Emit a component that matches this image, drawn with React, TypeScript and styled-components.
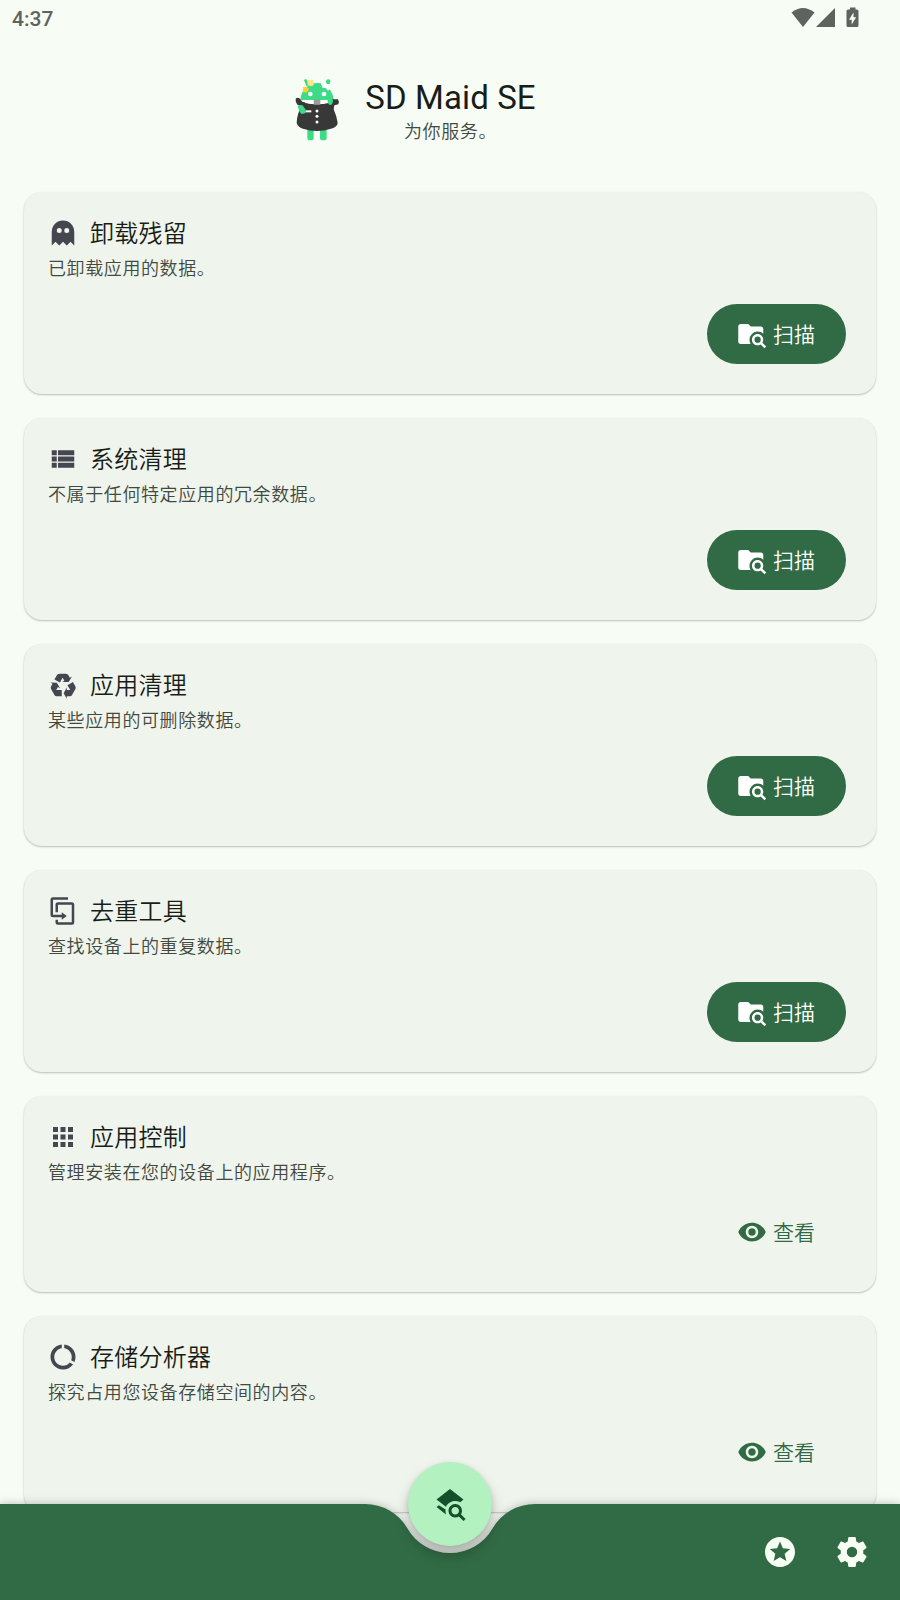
import React from "react";
import styled, { createGlobalStyle } from "styled-components";

const GlobalStyle = createGlobalStyle`
  * { box-sizing: border-box; }
  html, body { margin: 0; padding: 0; background: #f7fcf5; }
  body { font-family: Roboto, "Noto Sans CJK SC", sans-serif; color: #181d18; }
`;

const Screen = styled.div`
  position: relative;
  width: 900px;
  height: 1600px;
  overflow: hidden;
  display: flex;
  flex-direction: column;
  background: #f7fcf5;
`;

const StatusBar = styled.div`
  height: 36px;
  flex: none;
  display: flex;
  align-items: center;
  justify-content: space-between;
  padding: 0 39px 0 12px;
  color: #5f635f;
`;

const Clock = styled.span`
  font-size: 21px;
  font-weight: 500;
  line-height: 36px;
  padding-top: 2px;
`;

const StatusIcons = styled.svg`
  width: 70px;
  height: 24px;
  fill: currentColor;
`;

const Header = styled.header`
  height: 156px;
  flex: none;
  display: flex;
  justify-content: center;
  padding-top: 41px;
`;

const Mascot = styled.svg`
  width: 50px;
  height: 67px;
  margin: 1px 22px 0 -71px;
  flex: none;
`;

const Titles = styled.div`
  display: flex;
  flex-direction: column;
  align-items: center;
`;

const AppTitle = styled.h1`
  margin: 0;
  font-size: 33px;
  font-weight: 400;
  line-height: 42px;
  letter-spacing: 0.1px;
`;

const Slogan = styled.p`
  margin: 0;
  font-size: 18px;
  font-weight: 350;
  line-height: 26px;
  letter-spacing: 0.6px;
  color: #414941;
`;

const CardList = styled.main`
  display: flex;
  flex-direction: column;
  gap: 24px;
  padding: 0 24px;
`;

const Card = styled.section<{ $compact: boolean }>`
  height: ${(p) => (p.$compact ? 196 : 202)}px;
  flex: none;
  display: flex;
  flex-direction: column;
  padding: 24px 30px 30px 24px;
  border-radius: 18px;
  background: #eff4ec;
  box-shadow: 0 1px 2px rgba(0, 0, 0, 0.24), 0 0 1px rgba(0, 0, 0, 0.06);
`;

const CardHeading = styled.div`
  display: flex;
  align-items: center;
  gap: 12px;
  height: 34px;
`;

const CardTitle = styled.h2`
  margin: 0;
  padding-top: 2px;
  font-size: 24px;
  font-weight: 350;
  line-height: 34px;
  letter-spacing: 0.22px;
`;

const CardText = styled.p`
  margin: 6px 0 0;
  font-size: 18px;
  font-weight: 350;
  line-height: 26px;
  letter-spacing: 0.6px;
  color: #414941;
`;

const Action = styled.button<{ $filled: boolean }>`
  margin: auto 0 0 auto;
  flex: none;
  width: 139px;
  height: 60px;
  display: flex;
  align-items: center;
  gap: 6px;
  padding: 0 0 0 30px;
  border: 0;
  border-radius: 30px;
  font-family: inherit;
  font-size: 21px;
  font-weight: 350;
  line-height: 30px;
  white-space: nowrap;
  background: ${(p) => (p.$filled ? "#316b45" : "transparent")};
  color: ${(p) => (p.$filled ? "#ffffff" : "#316b45")};
`;

const ActionLabel = styled.span`
  padding-top: 2px;
`;

const Glyph = styled.svg<{ $size: number; $color?: string }>`
  width: ${(p) => p.$size}px;
  height: ${(p) => p.$size}px;
  fill: ${(p) => p.$color || "currentColor"};
  flex: none;
  display: block;
`;

const BottomBar = styled.nav`
  position: absolute;
  left: 0;
  bottom: 0;
  width: 900px;
  height: 96px;
  display: flex;
  align-items: center;
  justify-content: flex-end;
  gap: 36px;
  padding: 0 30px;
  color: #f7fff5;
`;

const BarShape = styled.svg`
  position: absolute;
  left: 0;
  top: 0;
  width: 900px;
  height: 96px;
  overflow: visible;
  fill: #316b45;
  filter: drop-shadow(0 0 4px rgba(0, 0, 0, 0.25));
`;

const BarButton = styled.button`
  position: relative;
  padding: 0;
  border: 0;
  background: none;
  color: inherit;
`;

const Fab = styled.button`
  position: absolute;
  left: 408px;
  bottom: 54px;
  width: 84px;
  height: 84px;
  display: flex;
  align-items: center;
  justify-content: center;
  padding: 0;
  border: 0;
  border-radius: 50%;
  background: #b3f1c1;
  color: #125129;
  box-shadow: 0 9px 14px rgba(0, 0, 0, 0.26), 0 1px 4px rgba(0, 0, 0, 0.1);
`;

const icons = {
  ghost:
    "M12,2A9,9 0 0,0 3,11V22L6,19L9,22L12,19L15,22L18,19L21,22V11A9,9 0 0,0 12,2M9,8A2,2 0 0,1 11,10A2,2 0 0,1 9,12A2,2 0 0,1 7,10A2,2 0 0,1 9,8M15,8A2,2 0 0,1 17,10A2,2 0 0,1 15,12A2,2 0 0,1 13,10A2,2 0 0,1 15,8Z",
  list: "M3 14h4v-4H3v4zm0 5h4v-4H3v4zM3 9h4V5H3v4zm5 5h13v-4H8v4zm0 5h13v-4H8v4zM8 5v4h13V5H8z",
  recycle:
    "M21.82,15.42L19.32,19.75C18.83,20.61 17.92,21.06 17,21H15V23L12.5,18.5L15,14V16H17.82L15.6,12.15L19.93,9.65L21.73,12.77C22.25,13.54 22.32,14.57 21.82,15.42M9.21,3.06H14.21C15.19,3.06 16.04,3.63 16.45,4.45L17.45,6.19L19.18,5.19L16.54,9.6L11.39,9.69L13.12,8.69L11.71,6.24L9.5,10.09L5.16,7.59L6.96,4.47C7.37,3.64 8.22,3.06 9.21,3.06M5.05,19.76L2.55,15.43C2.06,14.58 2.13,13.56 2.64,12.79L3.64,11.06L1.91,10.06L7.05,10.14L9.7,14.56L7.97,13.56L6.56,16H11V21H7.4C6.47,21.07 5.55,20.61 5.05,19.76Z",
  duplicate:
    "M11,17H4A2,2 0 0,1 2,15V3A2,2 0 0,1 4,1H16V3H4V15H11V13L15,16L11,19V17M19,21V7H8V13H6V7A2,2 0 0,1 8,5H19A2,2 0 0,1 21,7V21A2,2 0 0,1 19,23H8A2,2 0 0,1 6,21V19H8V21H19Z",
  apps: "M4 8h4V4H4v4zm6 12h4v-4h-4v4zm-6 0h4v-4H4v4zm0-6h4v-4H4v4zm6 0h4v-4h-4v4zm6-10v4h4V4h-4zm-6 4h4V4h-4v4zm6 6h4v-4h-4v4zm0 6h4v-4h-4v4z",
  usage:
    "M13 2.05v3.03c3.39.49 6 3.39 6 6.92 0 .9-.18 1.75-.48 2.54l2.6 1.53c.56-1.24.88-2.62.88-4.07 0-5.18-3.95-9.45-9-9.95zM12 19c-3.87 0-7-3.13-7-7 0-3.53 2.61-6.43 6-6.92V2.05c-5.06.5-9 4.76-9 9.95 0 5.52 4.47 10 9.99 10 3.31 0 6.24-1.61 8.06-4.09l-2.6-1.53C16.17 17.98 14.21 19 12 19z",
  folderSearch:
    "M16.5,12C19,12 21,14 21,16.5C21,17.38 20.75,18.21 20.31,18.9L23.39,22L22,23.39L18.88,20.32C18.19,20.75 17.37,21 16.5,21C14,21 12,19 12,16.5C12,14 14,12 16.5,12M16.5,14A2.5,2.5 0 0,0 14,16.5A2.5,2.5 0 0,0 16.5,19A2.5,2.5 0 0,0 19,16.5A2.5,2.5 0 0,0 16.5,14M9,4L11,6H19A2,2 0 0,1 21,8V11.81C19.83,10.69 18.25,10 16.5,10A6.5,6.5 0 0,0 10,16.5C10,17.79 10.37,19 11,20H3C1.89,20 1,19.1 1,18V6C1,4.89 1.89,4 3,4H9Z",
  eye: "M12 4.5C7 4.5 2.73 7.61 1 12c1.73 4.39 6 7.5 11 7.5s9.27-3.11 11-7.5c-1.73-4.39-6-7.5-11-7.5zM12 17c-2.76 0-5-2.24-5-5s2.24-5 5-5 5 2.24 5 5-2.24 5-5 5zm0-8c-1.66 0-3 1.34-3 3s1.34 3 3 3 3-1.34 3-3-1.34-3-3-3z",
  layersSearch:
    "M19.31 18.9L22.39 22L21 23.39L17.88 20.32C17.19 20.75 16.37 21 15.5 21C13 21 11 19 11 16.5C11 14 13 12 15.5 12C18 12 20 14 20 16.5C20 17.38 19.75 18.21 19.31 18.9M15.5 19C16.88 19 18 17.88 18 16.5C18 15.12 16.88 14 15.5 14C14.12 14 13 15.12 13 16.5C13 17.88 14.12 19 15.5 19M21 9L12 2L3 9L9.3 13.9C10.3 11.6 12.7 10 15.5 10C16.7 10 17.8 10.3 18.8 10.8L21 9M9 16.5C9 16.2 9 15.9 9.05 15.6L4.62 12.8L3 14.07L9.3 18.97C9.1 18.2 9 17.3 9 16.5Z",
  stars:
    "M11.99 2C6.47 2 2 6.48 2 12s4.47 10 9.99 10C17.52 22 22 17.52 22 12S17.52 2 11.99 2zm4.24 16L12 15.45 7.77 18l1.12-4.81-3.73-3.23 4.92-.42L12 5l1.92 4.53 4.92.42-3.73 3.23L16.23 18z",
  cog: "M12,15.5A3.5,3.5 0 0,1 8.5,12A3.5,3.5 0 0,1 12,8.5A3.5,3.5 0 0,1 15.5,12A3.5,3.5 0 0,1 12,15.5M19.43,12.97C19.47,12.65 19.5,12.33 19.5,12C19.5,11.67 19.47,11.34 19.43,11L21.54,9.37C21.73,9.22 21.78,8.95 21.66,8.73L19.66,5.27C19.54,5.05 19.27,4.96 19.05,5.05L16.56,6.05C16.04,5.66 15.5,5.32 14.87,5.07L14.5,2.42C14.46,2.18 14.25,2 14,2H10C9.75,2 9.54,2.18 9.5,2.42L9.13,5.07C8.5,5.32 7.96,5.66 7.44,6.05L4.95,5.05C4.73,4.96 4.46,5.05 4.34,5.27L2.34,8.73C2.21,8.95 2.27,9.22 2.46,9.37L4.57,11C4.53,11.34 4.5,11.67 4.5,12C4.5,12.33 4.53,12.65 4.57,12.97L2.46,14.63C2.27,14.78 2.21,15.05 2.34,15.27L4.34,18.73C4.46,18.95 4.73,19.03 4.95,18.95L7.44,17.94C7.96,18.34 8.5,18.68 9.13,18.93L9.5,21.58C9.54,21.82 9.75,22 10,22H14C14.25,22 14.46,21.82 14.5,21.58L14.87,18.93C15.5,18.67 16.04,18.34 16.56,17.94L19.05,18.95C19.27,19.03 19.54,18.95 19.66,18.73L21.66,15.27C21.78,15.05 21.73,14.78 21.54,14.63L19.43,12.97Z",
};

type IconName = keyof typeof icons;

const Icon = ({ name, size, color }: { name: IconName; size: number; color?: string }) => (
  <Glyph viewBox="0 0 24 24" $size={size} $color={color} aria-hidden>
    <path d={icons[name]} />
  </Glyph>
);

const tools: { icon: IconName; title: string; text: string; scan: boolean }[] = [
  { icon: "ghost", title: "卸载残留", text: "已卸载应用的数据。", scan: true },
  { icon: "list", title: "系统清理", text: "不属于任何特定应用的冗余数据。", scan: true },
  { icon: "recycle", title: "应用清理", text: "某些应用的可删除数据。", scan: true },
  { icon: "duplicate", title: "去重工具", text: "查找设备上的重复数据。", scan: true },
  { icon: "apps", title: "应用控制", text: "管理安装在您的设备上的应用程序。", scan: false },
  { icon: "usage", title: "存储分析器", text: "探究占用您设备存储空间的内容。", scan: false },
];

const MaidMascot = () => (
  <Mascot viewBox="40 54 150 201" aria-hidden>
    <g fill="#3ddb85">
      <rect x="83" y="200" width="19" height="41" rx="8" />
      <rect x="121" y="200" width="20" height="41" rx="8" />
      <path d="M62 120C64 92 84 69 112 69C140 69 160 92 162 120Z" />
      <path d="M73 60q6-5 11 2l4 14-8 2z" />
      <path d="M152 60q-8-5-13 2l-2 10 10 6q6-8 5-18z" />
      <path d="M142 118h19v6q-1 12-10 12q-9-2-9-10z" />
    </g>
    <path d="M124 72l12-8 6 8 9 0 3 12-9 8-7-8-9 0z" fill="#fff" />
    <path d="M84 60h18v16l-10 3-9-7z" fill="#ffe68a" />
    <path d="M70 82l12-2 6 8-6 9h-13z" fill="#ffd02f" />
    <circle cx="92" cy="102" r="7" fill="#fff" />
    <circle cx="133" cy="102" r="7" fill="#fff" />
    <path
      d="M48 116q5-5 13 0l7 9q44 14 86 0l4-7h17q4 6 1 15l-12 3-2 12q8 18 12 40q0 12-20 18q-42 14-84 0q-17-6-19-18q1-28 16-50l-13-3q-8-9-6-19z"
      fill="#383838"
    />
    <path d="M74 119q38 12 76 0l-3 10q-35 8-70 0z" fill="#fff" />
    <path d="M102 119h20v15h-20z" fill="#9b9b9b" />
    <path d="M144 119h16q0 15-9 16q-7-2-7-16z" fill="#3ddb85" />
    <path d="M54 137l14-2 10 14v10l-12 3q-8-7-12-25z" fill="#3ddb85" />
    <path d="M78 151h17v6H78z" fill="#fff" />
    <g fill="#fff">
      <circle cx="112" cy="153" r="4.5" />
      <circle cx="112" cy="169" r="4.5" />
      <circle cx="112" cy="186" r="4.5" />
    </g>
  </Mascot>
);

export default function App() {
  return (
    <>
      <GlobalStyle />
      <Screen>
        <StatusBar>
          <Clock>4:37</Clock>
          <StatusIcons viewBox="0 0 70 24" aria-hidden>
            <path d="M0.5 6.5Q12 -2.5 23.5 6.5L12 21Z" />
            <path d="M44 2V21H25Z" />
            <path d="M59 1.500h5.500v2h1.500q1.500 0 1.500 1.500v14.500q0 1.500-1.500 1.500h-9q-1.500 0-1.500-1.500V5q0-1.500 1.500-1.500h2z" />
            <path d="M62.500 6.500l-4.500 7.200h2.700v4.800l4.500-7.200h-2.700z" fill="#f7fcf5" />
          </StatusIcons>
        </StatusBar>
        <Header>
          <MaidMascot />
          <Titles>
            <AppTitle>SD Maid SE</AppTitle>
            <Slogan>为你服务。</Slogan>
          </Titles>
        </Header>
        <CardList>
          {tools.map((tool) => (
            <Card key={tool.title} $compact={!tool.scan}>
              <CardHeading>
                <Icon name={tool.icon} size={30} color="#45464f" />
                <CardTitle>{tool.title}</CardTitle>
              </CardHeading>
              <CardText>{tool.text}</CardText>
              <Action $filled={tool.scan}>
                <Icon name={tool.scan ? "folderSearch" : "eye"} size={30} />
                <ActionLabel>{tool.scan ? "扫描" : "查看"}</ActionLabel>
              </Action>
            </Card>
          ))}
        </CardList>
        <BottomBar>
          <BarShape viewBox="0 0 900 96" aria-hidden>
            <path d="M0 0H365A49 49 0 0 1 407.500 24.500A49 49 0 0 0 492.500 24.500A49 49 0 0 1 535 0H900V96H0Z" />
          </BarShape>
          <BarButton aria-label="Upgrade">
            <Icon name="stars" size={36} />
          </BarButton>
          <BarButton aria-label="Settings">
            <Icon name="cog" size={36} />
          </BarButton>
        </BottomBar>
        <Fab aria-label="Scan">
          <Icon name="layersSearch" size={36} />
        </Fab>
      </Screen>
    </>
  );
}
